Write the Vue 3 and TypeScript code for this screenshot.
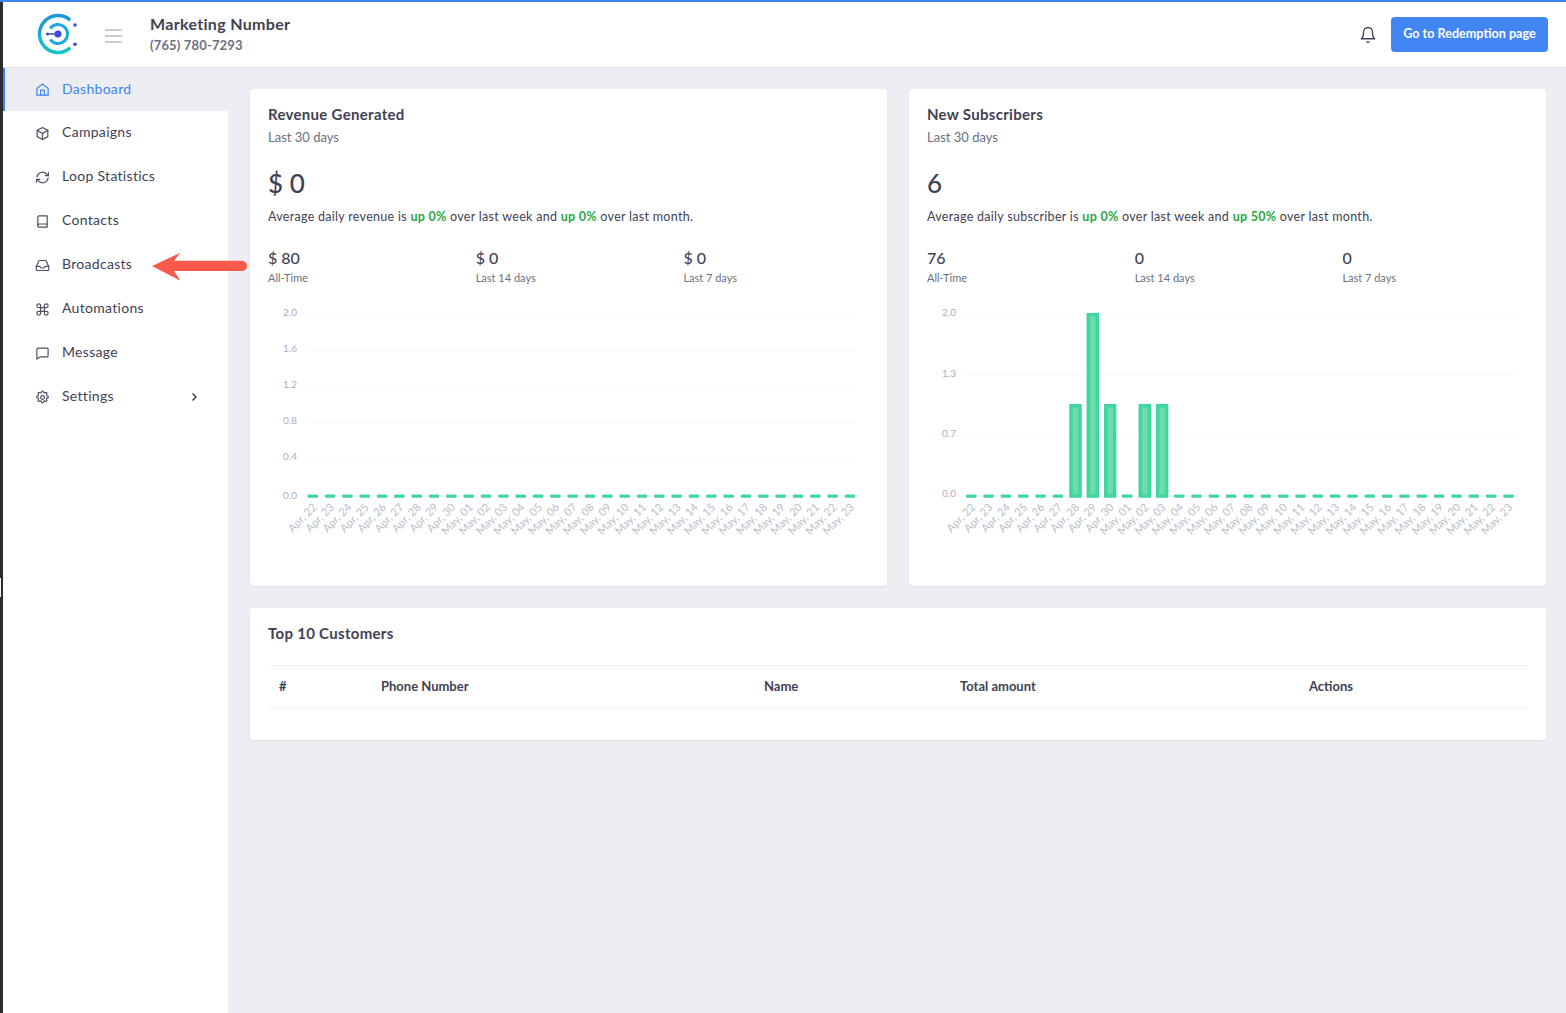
<script setup lang="ts">
const navItems = [
  { label: 'Dashboard', icon: 'home', active: true },
  { label: 'Campaigns', icon: 'cube' },
  { label: 'Loop Statistics', icon: 'loop' },
  { label: 'Contacts', icon: 'book' },
  { label: 'Broadcasts', icon: 'inbox' },
  { label: 'Automations', icon: 'cmd' },
  { label: 'Message', icon: 'msg' },
  { label: 'Settings', icon: 'gear', chevron: true },
]

const dates: string[] = []
for (let d = 22; d <= 30; d++) dates.push(`Apr, ${d}`)
for (let d = 1; d <= 23; d++) dates.push(`May, ${String(d).padStart(2, '0')}`)

const STEP = 17.33
const cols = dates.map((label, i) => ({ label, x: i * STEP }))

const revenueTicks = [
  { t: '2.0', y: 315 }, { t: '1.6', y: 351 }, { t: '1.2', y: 387 },
  { t: '0.8', y: 423 }, { t: '0.4', y: 459 },
]
const subTicks = [
  { t: '2.0', y: 314 }, { t: '1.3', y: 375 }, { t: '0.7', y: 435 },
]
const subValues: Record<number, number> = { 6: 1, 7: 2, 8: 1, 10: 1, 11: 1 }
function subBarTop(i: number): number {
  return subValues[i] === 2 ? 314.7 : 405.7
}

const cards = [
  {
    title: 'Revenue Generated', total: '$ 0', noun: 'revenue', week: '0%', month: '0%',
    stats: [['$ 80', 'All-Time'], ['$ 0', 'Last 14 days'], ['$ 0', 'Last 7 days']],
  },
  {
    title: 'New Subscribers', total: '6', noun: 'subscriber', week: '0%', month: '50%',
    stats: [['76', 'All-Time'], ['0', 'Last 14 days'], ['0', 'Last 7 days']],
  },
]
const columns = ['#', 'Phone Number', 'Name', 'Total amount', 'Actions']
</script>

<template>
  <div class="page">
    <div class="frame">
      <header class="topbar">
        <svg class="logo" width="42" height="42" viewBox="0 0 42 42" fill="none">
          <defs>
            <linearGradient id="lg" x1="0" y1="0" x2="0" y2="1">
              <stop offset="0" stop-color="#1b96d8" />
              <stop offset="1" stop-color="#13c4c4" />
            </linearGradient>
          </defs>
          <path d="M33.2 7.100A18.500 18.500 0 1 0 33.200 34.900" stroke="url(#lg)" stroke-width="3.400" />
          <path d="M13.200 15.600A9.500 9.500 0 1 1 13.200 26.400" stroke="#1ea8e0" stroke-width="3" />
          <path d="M10 21H21" stroke="#3a4bd0" stroke-width="1.500" />
          <circle cx="10.500" cy="21" r="1.600" fill="#3a4bd0" />
          <circle cx="21" cy="21" r="3.500" fill="#3a4bd0" />
          <circle cx="38" cy="12" r="1.800" fill="#3a4bd0" />
          <circle cx="38" cy="31.300" r="1.800" fill="#3a4bd0" />
        </svg>
        <svg class="burger" width="17" height="14" viewBox="0 0 17 14" stroke="#b8bcc4" stroke-width="1.700">
          <path d="M0 1h17M0 7h17M0 13h17" />
        </svg>
        <div class="brand">
          <div class="brand-name">Marketing Number</div>
          <div class="brand-phone">(765) 780-7293</div>
        </div>
        <svg class="bell" width="18" height="18" viewBox="0 0 24 24" fill="none" stroke="#3f4254" stroke-width="1.800" stroke-linecap="round" stroke-linejoin="round">
          <path d="M18 8a6 6 0 0 0-12 0c0 7-3 9-3 9h18s-3-2-3-9" />
          <path d="M10.500 21a1.700 1.700 0 0 0 3 0" />
        </svg>
        <button class="cta"><span class="cta-text">Go to Redemption page</span></button>
      </header>

      <div class="body">
        <aside class="sidebar">
          <div v-for="item in navItems" :key="item.label" class="nav" :class="{ active: item.active }">
            <svg class="nav-icon" width="15" height="15" viewBox="0 0 24 24" fill="none" stroke="currentColor" stroke-width="1.900" stroke-linecap="round" stroke-linejoin="round">
              <template v-if="item.icon === 'home'">
                <path d="M3 10.500 12 3l9 7.500V21H3z" /><path d="M9 21v-8h6v8" />
              </template>
              <template v-else-if="item.icon === 'cube'">
                <path d="M12 2.500 20.500 7v10L12 21.500 3.500 17V7z" /><path d="M3.500 7 12 12l8.500-5M12 12v9.500" />
              </template>
              <template v-else-if="item.icon === 'loop'">
                <path d="M3 11a9 9 0 0 1 15.500-4.500L21 9" /><path d="M21.500 4v5h-5" />
                <path d="M21 13a9 9 0 0 1-15.500 4.500L3 15" /><path d="M2.500 20v-5h5" />
              </template>
              <template v-else-if="item.icon === 'book'">
                <path d="M4.500 19V5a2 2 0 0 1 2-2h13v18h-13a2 2 0 0 1-2-2z" /><path d="M4.500 18a2 2 0 0 1 2-2h13" />
              </template>
              <template v-else-if="item.icon === 'inbox'">
                <path d="M2 14v4a2 2 0 0 0 2 2h16a2 2 0 0 0 2-2v-4l-3.500-8a2 2 0 0 0-2-2h-9a2 2 0 0 0-2 2z" />
                <path d="M2 13.500h6l1.500 2.500h5l1.500-2.500h6" />
              </template>
              <template v-else-if="item.icon === 'cmd'">
                <path d="M15 9V6a3 3 0 1 1 3 3h-3zM9 9V6a3 3 0 1 0-3 3h3zM15 15v3a3 3 0 1 0 3-3h-3zM9 15v3a3 3 0 1 1-3-3h3zM9 9h6v6H9z" />
              </template>
              <template v-else-if="item.icon === 'msg'">
                <path d="M5 3.500h14a2 2 0 0 1 2 2v10a2 2 0 0 1-2 2H8l-5 3.500V5.500a2 2 0 0 1 2-2z" />
              </template>
              <template v-else>
                <circle cx="12" cy="12" r="3" />
                <path d="M10.300 3.300a1.700 1.700 0 0 1 3.400 0 1.700 1.700 0 0 0 2.600 1.100 1.700 1.700 0 0 1 2.400 2.400 1.700 1.700 0 0 0 1 2.500 1.700 1.700 0 0 1 0 3.400 1.700 1.700 0 0 0-1 2.500 1.700 1.700 0 0 1-2.400 2.400 1.700 1.700 0 0 0-2.600 1.100 1.700 1.700 0 0 1-3.400 0 1.700 1.700 0 0 0-2.600-1.100 1.700 1.700 0 0 1-2.400-2.400 1.700 1.700 0 0 0-1-2.500 1.700 1.700 0 0 1 0-3.400 1.700 1.700 0 0 0 1-2.500 1.700 1.700 0 0 1 2.400-2.400 1.700 1.700 0 0 0 2.600-1.100z" />
              </template>
            </svg>
            <span class="nav-label">{{ item.label }}</span>
            <svg v-if="item.chevron" class="chev" width="8" height="10" viewBox="0 0 8 10" fill="none" stroke="#3f4254" stroke-width="1.500"><path d="M2.500 1.500 6 5 2.500 8.500" /></svg>
          </div>
        </aside>

        <main class="content">
          <div class="cards">
            <section v-for="(card, ci) in cards" :key="card.title" class="card chart-card">
              <h2 class="card-title">{{ card.title }}</h2>
              <div class="sub">Last 30 days</div>
              <div class="total">{{ card.total }}</div>
              <p class="avg">Average daily {{ card.noun }} is <b class="up">up {{ card.week }}</b> over last week and <b class="up">up {{ card.month }}</b> over last month.</p>
              <div class="stats">
                <div v-for="s in card.stats" :key="s[1]" class="stat">
                  <div class="stat-v">{{ s[0] }}</div>
                  <div class="stat-l">{{ s[1] }}</div>
                </div>
              </div>
              <svg v-if="ci === 0" class="chart" width="601" height="240" viewBox="268 305 601 240">
                <g v-for="t in revenueTicks" :key="t.t">
                  <line x1="306" x2="858" :y1="t.y" :y2="t.y" class="grid" />
                  <text x="297" :y="t.y + 1" class="tick" text-anchor="end">{{ t.t }}</text>
                </g>
                <text x="297" y="498.500" class="tick" text-anchor="end">0.0</text>
                <g v-for="c in cols" :key="c.label" :transform="`translate(${306.500 + c.x} 0)`">
                  <line x1="0" x2="0" y1="498" y2="503" class="grid" />
                  <rect x="1" y="494.600" width="10.500" height="3.200" rx="1" class="zero" />
                  <text class="cat" transform="translate(11 508) rotate(-45)" text-anchor="end">{{ c.label }}</text>
                </g>
                <line x1="859" x2="859" y1="498" y2="503" class="grid" />
              </svg>
              <svg v-else class="chart" width="601" height="240" viewBox="927 305 601 240">
                <g v-for="t in subTicks" :key="t.t">
                  <line x1="965" x2="1518" :y1="t.y" :y2="t.y" class="grid" />
                  <text x="956" :y="t.y + 2" class="tick" text-anchor="end">{{ t.t }}</text>
                </g>
                <text x="956" y="497" class="tick" text-anchor="end">0.0</text>
                <g v-for="(c, i) in cols" :key="c.label" :transform="`translate(${965 + c.x} 0)`">
                  <line x1="0" x2="0" y1="498" y2="503" class="grid" />
                  <rect v-if="subValues[i]" x="2" :y="subBarTop(i)" width="9" :height="496 - subBarTop(i)" class="bar" />
                  <rect v-else x="1" y="494.600" width="10.500" height="3.200" rx="1" class="zero" />
                  <text class="cat" transform="translate(11 508) rotate(-45)" text-anchor="end">{{ c.label }}</text>
                </g>
              </svg>
            </section>
          </div>

          <section class="card table-card">
            <h2 class="card-title">Top 10 Customers</h2>
            <div class="thead">
              <span v-for="c in columns" :key="c" class="th">{{ c }}</span>
            </div>
          </section>
        </main>
      </div>
    </div>

    <div class="arrow-wrap">
      <svg width="98" height="32" viewBox="0 0 98 32">
        <path d="M0 16 28.500 2.700 22 10.700H90a5.150 5.150 0 0 1 0 10.300H22L28.500 30.700z" fill="#fb5a4b" />
      </svg>
    </div>
    <div class="edge-mark"></div>
  </div>
</template>

<style>
html, body { margin: 0; background: #edeef3; }
</style>

<style scoped>
.page {
  position: relative;
  width: 1566px;
  height: 1013px;
  overflow: hidden;
  background: #edeef3;
  border-top: 2px solid #3f83f0;
  box-sizing: border-box;
  font-family: "Lato", "Noto Sans", sans-serif;
  color: #3f4254;
}
.frame {
  height: 100%;
  border-left: 3px solid #2c2c2e;
  box-sizing: border-box;
}
.topbar {
  height: 66px;
  box-sizing: border-box;
  background: #fff;
  border-bottom: 1px solid #e2e3e9;
  display: flex;
  align-items: center;
  padding: 0 18px 0 34px;
}
.logo { flex: none; margin-top: -1px; }
.burger { margin: 3px 0 0 26px; flex: none; }
.brand { margin-left: 28px; flex: 1; margin-top: -2px; }
.brand-name { font-size: 16px; font-weight: 700; line-height: 22px; color: #3f4254; letter-spacing: .32px; }
.brand-phone { font-size: 13px; font-weight: 700; line-height: 18px; color: #6b7080; margin-top: 1px; letter-spacing: .15px; }
.bell { flex: none; margin-right: 14px; }
.cta {
  width: 157px;
  height: 35px;
  border: 0;
  border-radius: 4px;
  background: #4285f4;
  color: #fff;
  font: 700 12.600px "Lato", sans-serif;
  padding: 0 0 3px;
}
.body { display: flex; height: 945px; }
.sidebar {
  width: 225px;
  flex: none;
  background: #fff;
}
.nav {
  height: 44px;
  display: flex;
  align-items: center;
  padding-left: 31px;
  font-size: 14px;
  letter-spacing: .3px;
  color: #3f4254;
}
.nav.active {
  height: 43px;
  background: #edeef3;
  color: #3f83f0;
  box-shadow: inset 2px 0 0 #3f83f0;
}
.nav-icon { flex: none; color: #4d5262; margin-left: 1px; }
.nav.active .nav-icon { color: #3f83f0; }
.nav-label { margin-left: 12px; flex: 1; padding-bottom: 3px; }
.chev { margin-right: 30px; }
.content { flex: 1; min-width: 0; padding: 21px 20px 0 22px; }
.cards { display: flex; gap: 22px; }
.card {
  background: #fff;
  border-radius: 4px;
  box-shadow: 0 1px 1px rgba(60, 70, 100, .08);
}
.chart-card {
  flex: 1 1 0;
  min-width: 0;
  height: 497px;
  padding: 15px 18px 0;
  box-sizing: border-box;
}
.card-title { margin: 0; font-size: 15px; line-height: 20px; font-weight: 700; color: #3f4254; letter-spacing: .3px; }
.sub { font-size: 13px; line-height: 18px; margin-top: 4px; color: #6b7080; }
.total { font-size: 26px; line-height: 32px; margin-top: 21px; color: #3f4254; font-weight: 500; }
.avg { margin: 9px 0 0; font-size: 12.500px; line-height: 18px; color: #3f4254; letter-spacing: .29px; }
.up { color: #28a745; font-weight: 700; }
.stats { display: grid; grid-template-columns: repeat(3, 207.700px); margin-top: 22px; }
.stat-v { font-size: 16px; line-height: 20px; font-weight: 500; color: #3f4254; }
.stat-l { font-size: 11px; line-height: 16px; margin-top: 2px; color: #6b7080; }
.chart { display: block; margin-top: 19px; }
.grid { stroke: #f8f8fa; stroke-width: 1; }
.tick { font-size: 10px; fill: #a9afbc; }
.cat { font-size: 11px; fill: #b9bec9; }
.zero { fill: #3fd69f; }
.bar { fill: #6fdcb0; stroke: #3fd69f; stroke-width: 3.500; }
.table-card {
  margin-top: 22px;
  height: 132px;
  padding: 15px 18px 0;
  box-sizing: border-box;
}
.thead {
  margin-top: 22px;
  height: 43px;
  box-sizing: border-box;
  border-top: 1px solid #f1f2f5;
  border-bottom: 1px solid #f1f2f5;
  display: grid;
  grid-template-columns: 102px 383px 196px 349px 1fr;
  align-items: center;
  padding: 0 0 2px 11px;
  font-size: 13px;
  font-weight: 700;
  color: #3f4254;
}
.arrow-wrap { position: absolute; left: 151.500px; top: 248px; line-height: 0; }
.edge-mark { position: absolute; left: 0; top: 576px; width: 1px; height: 19px; background: #f2f2f2; }
</style>
